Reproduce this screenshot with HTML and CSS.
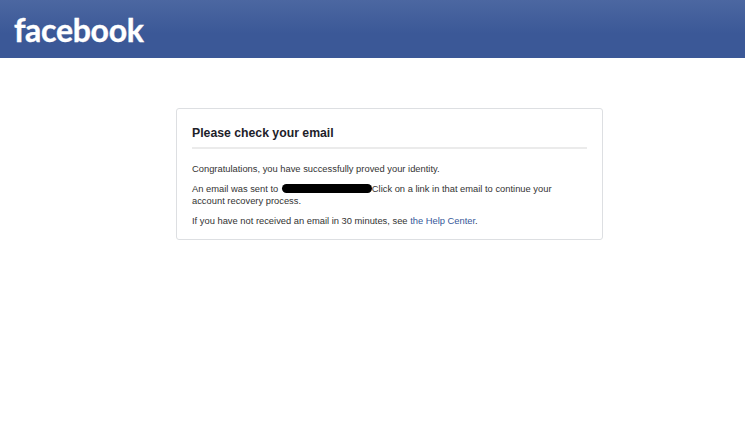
FILE: index.html
```html
<!DOCTYPE html>
<html lang="en">
<head>
<meta charset="utf-8">
<title>Please check your email</title>
<link rel="stylesheet" href="styles.css">
</head>
<body>
<header class="topbar"><span class="logo">facebook</span></header>
<main class="content">
  <section class="card">
    <h1 class="title">Please check your email</h1>
    <p class="line">Congratulations, you have successfully proved your identity.</p>
    <p class="line">An email was sent to <span class="redact"></span>Click on a link in that email to continue your<br>account recovery process.</p>
    <p class="line">If you have not received an email in 30 minutes, see <a class="link" href="#">the Help Center</a>.</p>
  </section>
</main>
</body>
</html>
```
FILE: styles.css
```css
html, body { margin: 0; padding: 0; background: #fff; }
body { font-family: "Liberation Sans", Arial, sans-serif; color: #1d2129; }
.topbar {
  height: 58px;
  box-sizing: border-box;
  padding: 10px 0 0 14px;
  background: linear-gradient(#4c67a1 0, #3b5897 34px, #3b5897 100%);
}
.logo {
  display: block;
  font-family: "Lato", sans-serif;
  font-weight: 700;
  font-size: 32px;
  line-height: 40px;
  letter-spacing: -0.3px;
  color: #fff;
  -webkit-text-stroke: 0.4px #fff;
}
.content { padding: 50px 0 0 176px; }
.card {
  width: 427px;
  height: 132px;
  box-sizing: border-box;
  padding: 16px 15px 0;
  border: 1px solid #dddfe2;
  border-radius: 3px;
}
.title {
  margin: 0 0 14px;
  padding-bottom: 6px;
  height: 16px;
  box-sizing: content-box;
  border-bottom: 2px solid #ebebeb;
  font-size: 12.25px;
  line-height: 16px;
  font-weight: 700;
  color: #1d2129;
}
.line { margin: 0 0 8px; font-size: 9.36px; line-height: 12px; color: #333; }
.redact {
  display: inline-block;
  width: 90px;
  height: 9px;
  margin-left: 1px;
  vertical-align: -1px;
  background: #000;
  border-radius: 5px;
}
.link { color: #365899; text-decoration: none; }
```
